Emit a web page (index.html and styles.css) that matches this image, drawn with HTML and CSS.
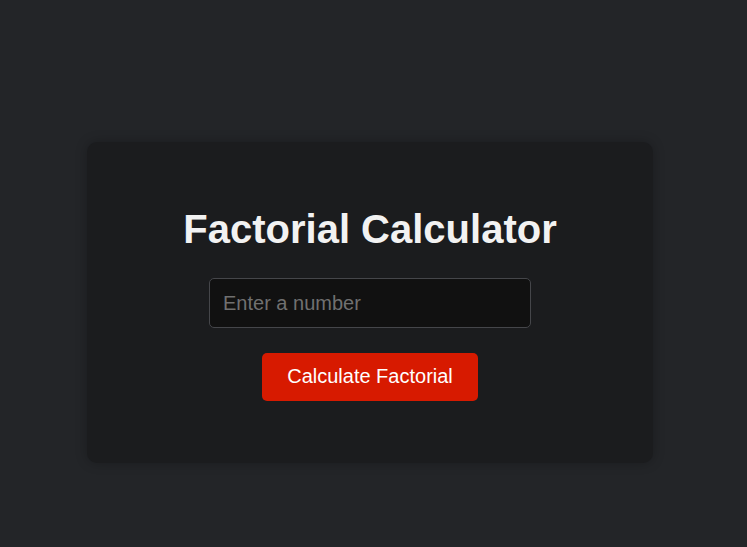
FILE: index.html
```html
<!DOCTYPE html>
<html lang="en">
<head>
<meta charset="utf-8">
<title>Factorial Calculator</title>
<link rel="stylesheet" href="styles.css">
</head>
<body>
<main class="card">
  <h1 class="title">Factorial Calculator</h1>
  <input class="number-input" type="number" placeholder="Enter a number">
  <button class="calc-btn" type="button">Calculate Factorial</button>
</main>
</body>
</html>
```

FILE: styles.css
```css
html, body {
  margin: 0;
  height: 100%;
}
body {
  background: #232528;
  font-family: "Liberation Sans", Arial, sans-serif;
  padding: 142px 0 0 87px;
  box-sizing: border-box;
}
.card {
  width: 566px;
  height: 321px;
  box-sizing: border-box;
  background: #1b1c1e;
  border-radius: 10px;
  box-shadow: 0 0 12px rgba(0, 0, 0, 0.25);
  padding-top: 64px;
  display: flex;
  flex-direction: column;
  align-items: center;
}
.title {
  margin: 0;
  font-size: 40px;
  line-height: 46px;
  font-weight: bold;
  color: #f2f2f2;
}
.number-input {
  margin-top: 26px;
  width: 322px;
  height: 50px;
  box-sizing: border-box;
  background: #111111;
  border: 1px solid #45464a;
  border-radius: 5px;
  padding: 0 13px;
  font-family: inherit;
  font-size: 20px;
  color: #eeeeee;
  outline: none;
  -moz-appearance: textfield;
}
.number-input::-webkit-outer-spin-button,
.number-input::-webkit-inner-spin-button {
  -webkit-appearance: none;
  margin: 0;
}
.number-input::placeholder {
  color: #707070;
}
.calc-btn {
  margin-top: 25px;
  width: 216px;
  height: 48px;
  background: #d71a00;
  border: none;
  border-radius: 5px;
  color: #ffffff;
  font-family: inherit;
  font-size: 20px;
  padding-bottom: 2px;
  cursor: pointer;
}
```
